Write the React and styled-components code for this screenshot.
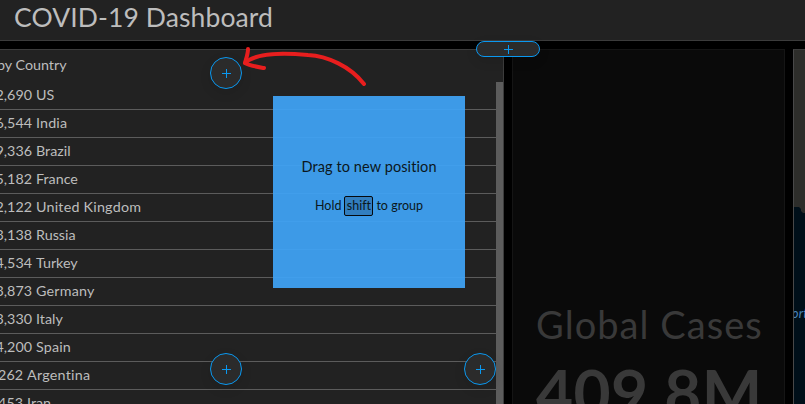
import React from "react";
import styled, { createGlobalStyle } from "styled-components";

const GlobalStyle = createGlobalStyle`
  * { box-sizing: border-box; }
  body { margin: 0; background: #000; }
`;

const Page = styled.div`
  position: relative;
  width: 805px;
  height: 404px;
  overflow: hidden;
  display: flex;
  flex-direction: column;
  gap: 8px;
  background: #000;
  color: #bdbdbd;
  font-family: Lato, "Liberation Sans", sans-serif;
  font-variant-ligatures: none;
`;

const Header = styled.header`
  height: 41px;
  flex: none;
  padding-left: 14px;
  background: #222;
  border-bottom: 1px solid #3c3c3c;
`;

const Title = styled.h1`
  margin: 0;
  font-size: 26.5px;
  font-weight: 400;
  line-height: 35px;
  letter-spacing: 0.1px;
  white-space: nowrap;
`;

const Panels = styled.main`
  flex: 1;
  min-height: 0;
  display: grid;
  grid-template-columns: 504px 273px 12px;
  column-gap: 8px;
`;

const ListPanel = styled.section`
  min-width: 0;
  overflow: hidden;
  display: flex;
  flex-direction: column;
  background: #222;
  border-top: 1px solid #3c3c3c;
  border-right: 1px solid #3c3c3c;
`;

const ListTitle = styled.h2`
  margin: 0 0 0 -3px;
  flex: none;
  height: 32px;
  font-size: 14.3px;
  font-weight: 400;
  line-height: 30px;
  white-space: nowrap;
`;

const Scroller = styled.div`
  flex: 1;
  min-height: 0;
  display: grid;
  grid-template-columns: 496px 7px;
`;

const Rows = styled.ul`
  margin: 0;
  padding: 0;
  list-style: none;
  min-height: 0;
  overflow: hidden;
`;

const Row = styled.li`
  height: 28px;
  display: flex;
  gap: 4px;
  border-bottom: 1px solid #5c5c5c;
  font-size: 14.3px;
  line-height: 26px;
  white-space: nowrap;
`;

const Count = styled.span`
  width: ${(p) => p.$width}px;
  flex: none;
  display: flex;
  justify-content: flex-end;
`;

const Country = styled.span`
  letter-spacing: ${(p) => p.$tracking || 0}px;
`;

const ScrollThumb = styled.div`
  background: #5c5c5c;
`;

const FigurePanel = styled.section`
  min-width: 0;
  overflow: hidden;
  padding: 252px 0 0 23px;
  background: #0a0a0a;
  border: 1px solid #151515;
  border-bottom: 0;
  color: #393939;
  white-space: nowrap;
`;

const FigureLabel = styled.div`
  font-size: 38px;
  line-height: 44px;
  letter-spacing: 1.05px;
`;

const FigureValue = styled.div`
  font-size: 64px;
  font-weight: 700;
  line-height: 76px;
  margin-top: 8px;
  letter-spacing: 0.4px;
`;

const MapPanel = styled.section`
  overflow: hidden;
  background: #000f19;
  border-top: 1px solid #3c3c3c;
  border-left: 1px solid #484848;
`;

const Land = styled.svg`
  display: block;
`;

const OceanLabel = styled.div`
  margin-top: 93px;
  margin-left: -2px;
  color: #4b86bd;
  font-size: 12.5px;
  line-height: 16px;
  letter-spacing: 0.3px;
  font-style: italic;
  white-space: nowrap;
`;

const AddButton = styled.button`
  position: absolute;
  left: ${(p) => p.$x}px;
  top: ${(p) => p.$y}px;
  width: ${(p) => (p.$wide ? 64 : 32)}px;
  height: ${(p) => (p.$wide ? 16 : 32)}px;
  padding: 0;
  display: flex;
  align-items: center;
  justify-content: center;
  background: #2b2b2b;
  border: 1px solid #0a98f0;
  border-radius: ${(p) => (p.$wide ? 8 : 16)}px;
  box-shadow: 0 4px 12px rgba(0, 0, 0, 0.1);
`;

const DropCard = styled.div`
  position: absolute;
  left: 273px;
  top: 96px;
  width: 192px;
  height: 192px;
  padding-top: 61px;
  display: flex;
  flex-direction: column;
  align-items: center;
  gap: 19px;
  background: rgba(63, 161, 242, 0.95);
  color: #0b1720;
  white-space: nowrap;
`;

const DropTitle = styled.div`
  font-size: 14.5px;
  line-height: 20px;
  letter-spacing: 0.1px;
`;

const DropHint = styled.div`
  display: flex;
  align-items: center;
  gap: 3px;
  height: 20px;
  font-size: 12.5px;
  line-height: 18px;
`;

const Key = styled.kbd`
  width: 29px;
  height: 20px;
  display: flex;
  align-items: center;
  justify-content: center;
  border: 1px solid #05090d;
  border-radius: 2px;
  background: #327ebf;
  font: inherit;
`;

const Arrow = styled.svg`
  position: absolute;
  left: 240px;
  top: 44px;
`;

const countries = [
  ["2,690", "US"],
  ["6,544", "India", 0.15],
  ["9,336", "Brazil"],
  ["5,182", "France"],
  ["2,122", "United Kingdom", 0.22],
  ["3,138", "Russia"],
  ["4,534", "Turkey"],
  ["3,873", "Germany", 0.2],
  ["3,330", "Italy"],
  ["4,200", "Spain", 0.15],
  ["262", "Argentina", 0.25],
  ["453", "Iran"],
];

const Plus = () => (
  <svg width="10" height="10" viewBox="0 0 10 10" shapeRendering="crispEdges">
    <path d="M5 1h1v9H5zM1 5h9v1H1z" fill="#0a98f0" />
  </svg>
);

export default function App() {
  return (
    <Page>
      <GlobalStyle />
      <Header>
        <Title>COVID-19 Dashboard</Title>
      </Header>
      <Panels>
        <ListPanel>
          <ListTitle>by Country</ListTitle>
          <Scroller>
            <Rows>
              {countries.map(([count, name, tracking]) => (
                <Row key={name}>
                  <Count $width={count.length > 3 ? 32 : 23}>{count}</Count>
                  <Country $tracking={tracking}>{name}</Country>
                </Row>
              ))}
            </Rows>
            <ScrollThumb />
          </Scroller>
        </ListPanel>
        <FigurePanel>
          <FigureLabel>Global Cases</FigureLabel>
          <FigureValue>409.8M</FigureValue>
        </FigurePanel>
        <MapPanel>
          <Land width="11" height="163" viewBox="0 0 11 163">
            <path d="M0 0H11V163H9L7 161V159L5 157H0Z" fill="#2d2d2a" />
          </Land>
          <OceanLabel>ort</OceanLabel>
        </MapPanel>
      </Panels>
      <DropCard>
        <DropTitle>Drag to new position</DropTitle>
        <DropHint>
          <span>Hold</span>
          <Key>shift</Key>
          <span>to group</span>
        </DropHint>
      </DropCard>
      <AddButton $x={210} $y={57}><Plus /></AddButton>
      <AddButton $x={210} $y={353}><Plus /></AddButton>
      <AddButton $x={464} $y={353}><Plus /></AddButton>
      <AddButton $x={476} $y={41} $wide><Plus /></AddButton>
      <Arrow width="130" height="44" viewBox="0 0 130 44" fill="none" stroke="#e81e1e" strokeWidth="4" strokeLinecap="round" strokeLinejoin="round">
        <path d="M124 40C110 22 87 12 68 11C45 9 17 8 5 19" />
        <path d="M8 5C8 10 6 15 5 19C10 22 18 23 24 24" />
      </Arrow>
    </Page>
  );
}
